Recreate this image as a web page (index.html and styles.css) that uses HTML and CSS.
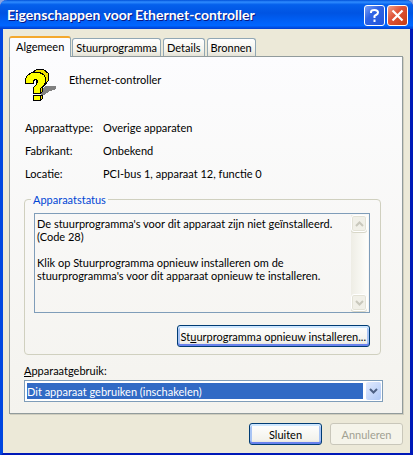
FILE: index.html
```html
<!DOCTYPE html>
<html lang="nl">
<head>
    <meta charset="UTF-8">
    <meta name="viewport" content="width=device-width, initial-scale=1.0">
    <title>Eigenschappen voor Ethernet-controller</title>
    <link rel="stylesheet" href="styles.css">
</head>
<body>
    <div class="window">
        <header class="titlebar">
            <h1>Eigenschappen voor Ethernet-controller</h1>
            <button class="caption-btn help" aria-label="Help">
                <svg width="19" height="19" viewBox="0 0 19 19" fill="none" stroke="#fff" stroke-width="2">
                    <path d="M6 7V6Q6 4 9.500 4T13 6.500Q13 8 11 9T9.500 11V12M9.500 13.500V16"/>
                </svg>
            </button>
            <button class="caption-btn close" aria-label="Sluiten">
                <svg width="19" height="19" viewBox="0 0 19 19" stroke="#fff" stroke-width="2.200">
                    <path d="M4.500 4.500L14.500 14.500M14.500 4.500L4.500 14.500"/>
                </svg>
            </button>
        </header>

        <main class="content">
            <div class="tabs" role="tablist">
                <button class="tab active" role="tab" aria-selected="true">Algemeen</button>
                <button class="tab" role="tab">Stuurprogramma</button>
                <button class="tab" role="tab">Details</button>
                <button class="tab" role="tab">Bronnen</button>
            </div>

            <section class="panel" role="tabpanel">
                <div class="device">
                    <svg class="device-icon" width="34" height="36" viewBox="0 0 34 36" shape-rendering="crispEdges">
                        <path fill="#808080" d="M18 22L21 19H32V22L26 24L20 28H17Z"/>
                        <path fill="#f0e000" stroke="#000" d="M7.500 6.500L12.500 2.500H19.500L24.500 6.500V13.500L18.500 20.500V24.500L16.500 26.500H12V12Z"/>
                        <path fill="#f0e000" stroke="#000" d="M10.500 28.500H18.500V31.500L16.500 33.500H10.500Z"/>
                        <path fill="#ffff00" stroke="#000" d="M1.500 16.500V11.500L3.500 8.500L7.500 5.500H15.500L19.500 7.500L21.500 10.500V15.500L19.500 18.500L16.500 21.500V26.500H9.500V20.500L12.500 17.500L13.500 14.500L12.500 12.500H10.500L9.500 14.500V16.500Z"/>
                        <path fill="#ffff00" stroke="#000" d="M9.500 28.500H16.500V33.500H9.500Z"/>
                    </svg>
                    <h2>Ethernet-controller</h2>
                </div>

                <dl class="info">
                    <dt>Apparaattype:</dt>
                    <dd>Overige apparaten</dd>
                    <dt>Fabrikant:</dt>
                    <dd>Onbekend</dd>
                    <dt>Locatie:</dt>
                    <dd>PCI-bus 1, apparaat 12, functie 0</dd>
                </dl>

                <fieldset class="group">
                    <legend><label for="status">Apparaatstatus</label></legend>
                    <div class="status-box">
                        <textarea id="status" rows="7" readonly>De stuurprogramma's voor dit apparaat zijn niet geïnstalleerd.
(Code 28)

Klik op Stuurprogramma opnieuw installeren om de
stuurprogramma's voor dit apparaat opnieuw te installeren.</textarea>
                        <div class="scrollbar">
                            <button class="scroll-btn" aria-label="Omhoog" disabled>
                                <svg width="9" height="6" viewBox="0 0 9 6" fill="none" stroke="#c9c8bc" stroke-width="2"><path d="M1 5L4.500 1.500L8 5"/></svg>
                            </button>
                            <button class="scroll-btn" aria-label="Omlaag" disabled>
                                <svg width="9" height="6" viewBox="0 0 9 6" fill="none" stroke="#c9c8bc" stroke-width="2"><path d="M1 1L4.500 4.500L8 1"/></svg>
                            </button>
                        </div>
                    </div>
                    <div class="group-actions">
                        <button class="btn btn-default">St<u>u</u>urprogramma opnieuw installeren...</button>
                    </div>
                </fieldset>

                <label class="usage-label" for="usage"><u>A</u>pparaatgebruik:</label>
                <div class="combo">
                    <select id="usage">
                        <option>Dit apparaat gebruiken (inschakelen)</option>
                    </select>
                    <span class="combo-arrow">
                        <svg width="9" height="6" viewBox="0 0 9 6" fill="none" stroke="#4d6185" stroke-width="2"><path d="M1 1L4.500 4.500L8 1"/></svg>
                    </span>
                </div>
            </section>
        </main>

        <footer class="actions">
            <button class="btn btn-default">Sluiten</button>
            <button class="btn" disabled>Annuleren</button>
        </footer>
    </div>
</body>
</html>
```

FILE: styles.css
```css
* {
    margin: 0;
    padding: 0;
    box-sizing: border-box;
}

body {
    background: #8ba4e0;
    font-family: Lato, "Liberation Sans", sans-serif;
    font-size: 11px;
    line-height: 13px;
    color: #000;
}

button,
select,
textarea {
    font: inherit;
    color: inherit;
}

.window {
    min-height: 100vh;
    display: flex;
    flex-direction: column;
    background: #ece9d8;
    border: 3px solid #0046e0;
    border-top: none;
    border-right-color: #0019b8;
    border-bottom-color: #0019b8;
    border-radius: 7px 7px 0 0;
}

/* Title bar */
.titlebar {
    display: flex;
    align-items: center;
    gap: 2px;
    height: 29px;
    margin: 0 -3px;
    padding: 1px 5px 0 7px;
    background: linear-gradient(#0050d8 0%, #2f8cff 7%, #0560ec 16%, #0054e3 45%, #0062fa 78%, #0066ff 88%, #003dd0 100%);
    border-radius: 7px 7px 0 0;
}

.titlebar h1 {
    flex: 1;
    font-size: 14px;
    line-height: 18px;
    font-weight: bold;
    color: #fff;
    text-shadow: 1px 1px 0 #0a1883;
    white-space: nowrap;
}

.caption-btn {
    display: grid;
    place-items: center;
    width: 21px;
    height: 21px;
    border: 1px solid #fff;
    border-radius: 3px;
}

.caption-btn.help {
    background: linear-gradient(135deg, #7ba0f5, #2f63e4 40%, #2256dc);
}

.caption-btn.close {
    background: linear-gradient(135deg, #f0a088, #e0553a 40%, #c83c10);
}

.content {
    flex: 1;
    padding: 7px 7px 0 6px;
}

/* Tabs */
.tabs {
    display: flex;
    align-items: flex-end;
    gap: 2px;
    height: 20px;
}

.tab {
    height: 18px;
    padding: 0 3px;
    background: linear-gradient(#fff, #f3f2ea 70%, #e4e2d6);
    border: 1px solid #91a7b4;
    border-bottom: none;
    border-radius: 3px 3px 0 0;
    white-space: nowrap;
}

.tab.active {
    position: relative;
    height: 21px;
    margin: 0 -1px -1px 0;
    padding: 0 6px 2px;
    background: #fcfcfe;
    border-top: 2px solid #f4a82c;
}

.panel {
    padding: 10px 19px 11px 14px;
    background: linear-gradient(#fcfcfe, #f4f3ee);
    border: 1px solid #919b9c;
    box-shadow: 1px 1px 0 #d0cebf;
}

.device {
    display: flex;
    gap: 11px;
    height: 36px;
}

.device h2 {
    margin-top: 6px;
    font-size: 11px;
    font-weight: normal;
}

.info {
    display: grid;
    grid-template-columns: 78px 1fr;
    row-gap: 10px;
    margin: 18px 0 13px 1px;
}

/* Device status */
.group {
    margin-right: 2px;
    padding: 7px 10px 7px 9px;
    border: 1px solid #d0d0bf;
    border-radius: 4px;
}

.group legend {
    padding: 0 2px;
    margin-left: -3px;
    color: #0046d5;
}

.status-box {
    display: flex;
    margin-bottom: 12px;
    border: 1px solid #7f9db9;
}

.status-box textarea {
    flex: 1;
    min-width: 0;
    padding: 3px 2px 4px;
    background: transparent;
    border: none;
    outline: none;
    resize: none;
    overflow: hidden;
}

.scrollbar {
    display: flex;
    flex-direction: column;
    justify-content: space-between;
    width: 17px;
    margin: 1px;
    background: linear-gradient(90deg, #eeede5, #fefefb);
}

.scroll-btn {
    display: grid;
    place-items: center;
    width: 16px;
    height: 17px;
    background: #f1f0e8;
    border: 1px solid #fff;
    border-radius: 3px;
    box-shadow: inset 0 0 0 1px #e3e2d6, 0 1px 0 #d8d7c8;
}

.group-actions {
    display: flex;
    justify-content: flex-end;
}

/* Buttons */
.btn {
    min-width: 73px;
    height: 22px;
    padding: 0 3px;
    background: linear-gradient(#fff, #f3f2ec 80%, #dcd8cf);
    border: 1px solid #003c74;
    border-radius: 3px;
}

.btn-default {
    box-shadow: inset 0 2px 0 #cee7ff, inset 0 -2px 0 #6982ee, inset 2px 0 0 #a8c4f4, inset -2px 0 0 #a8c4f4;
}

.btn:disabled {
    background: #f5f4ea;
    border-color: #c9c7ba;
    color: #a1a192;
}

.usage-label {
    display: block;
    margin: 9px 0 3px;
}

.combo {
    position: relative;
}

.combo select {
    display: block;
    width: 100%;
    height: 22px;
    padding: 2px 19px 2px 2px;
    appearance: none;
    background: #316ac5 content-box;
    border: 1px solid #7f9db9;
    border-radius: 0;
    box-shadow: inset 0 0 0 2px #fff, inset -19px 0 0 #fff;
    color: #fff;
    outline: none;
}

.combo-arrow {
    position: absolute;
    top: 2px;
    right: 2px;
    bottom: 2px;
    display: grid;
    place-items: center;
    width: 15px;
    background: linear-gradient(135deg, #e1eafe, #aec8f7);
    border-radius: 2px;
    pointer-events: none;
}

.actions {
    display: flex;
    justify-content: flex-end;
    gap: 8px;
    padding: 9px 7px 8px;
}
```
